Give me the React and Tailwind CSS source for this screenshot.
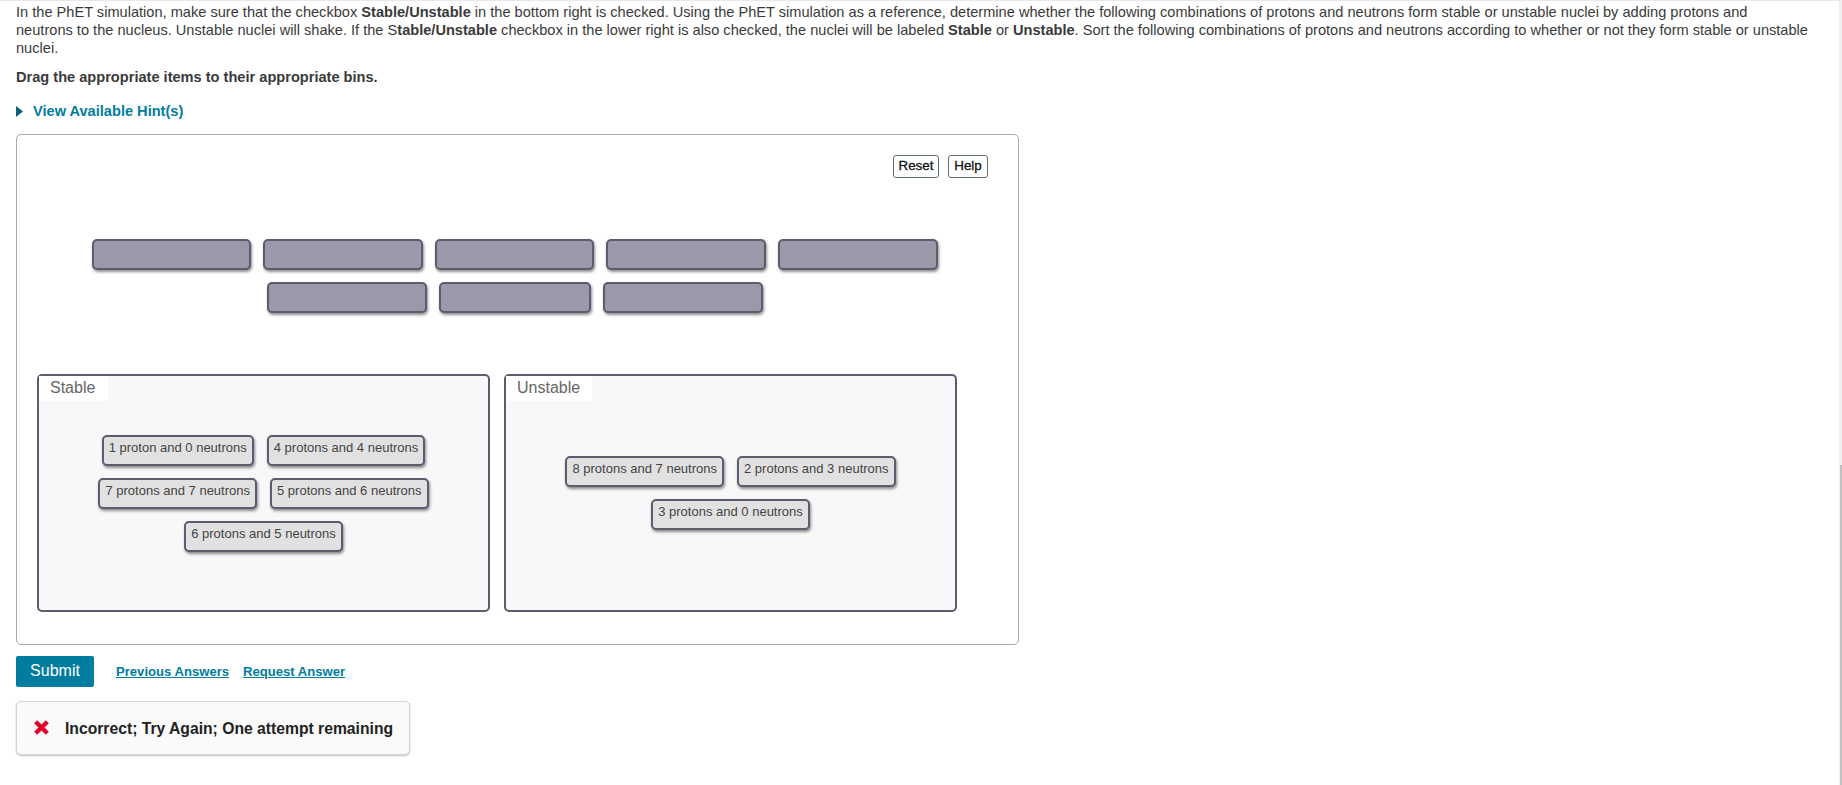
const Empty = ({ w }) => (
  <div className={`h-[31px] ${w} rounded-[5px] border-2 border-[#5c5c6e] bg-[#9a99aa] shadow-[1px_2px_3px_rgba(0,0,0,0.45)]`} />
);

const Chip = ({ children }) => (
  <div className="h-[31px] rounded-[5px] border-2 border-[#5c5c6e] bg-[#e1e1e1] px-[5px] text-[13px] leading-[22px] text-[#444] shadow-[1px_2px_3px_rgba(0,0,0,0.45)] whitespace-nowrap">
    {children}
  </div>
);

const Bin = ({ title, w, labelW, items }) => (
  <div className={`relative h-[238px] ${w} rounded-[5px] border-2 border-[#5c5c6e] bg-[#f8f8f8] flex flex-wrap content-center justify-center gap-x-[13px] gap-y-[12px] px-[40px]`}>
    <div className={`absolute left-0 top-0 h-[25px] ${labelW} bg-white pl-[11px] text-[16px] leading-[24px] text-[#666]`}>{title}</div>
    {items}
  </div>
);

export default function App() {
  return (
    <div className="relative h-[785px] overflow-hidden bg-white font-['Liberation_Sans',Arial,sans-serif] text-[14.6px] text-[#3a3a3a]">
      <div className="h-[1px] bg-[#e8e8e8]" />
      <div className="absolute right-0 top-0 h-full w-[3px] bg-[#f0f0f0]">
        <div className="absolute bottom-0 left-[1px] right-0 top-[465px] bg-[#c1c1c1]" />
      </div>
      <div className="pl-[16px] pr-[20px] pt-[2px]">
        <p className="leading-[18px] whitespace-nowrap">
          In the PhET simulation, make sure that the checkbox <b>Stable/Unstable</b> in the bottom right is checked. Using the PhET simulation as a reference, determine whether the following combinations of protons and neutrons form stable or unstable nuclei by adding protons and<br />
          neutrons to the nucleus. Unstable nuclei will shake. If the S<b>table/Unstable</b> checkbox in the lower right is also checked, the nuclei will be labeled <b>Stable</b> or <b>Unstable</b>. Sort the following combinations of protons and neutrons according to whether or not they form stable or unstable<br />
          nuclei.
        </p>
        <p className="mt-[11px] font-bold leading-[18px]">Drag the appropriate items to their appropriate bins.</p>
        <div className="mt-[16px] flex h-[18px] items-center gap-[10px] font-bold text-[#007c9e]">
          <svg width="7" height="11" viewBox="0 0 7 11"><path d="M0 0 L7 5.5 L0 11 Z" fill="#0b5f78" /></svg>
          <span className="leading-[18px]">View Available Hint(s)</span>
        </div>

        <div className="mt-[14px] h-[511px] w-[1003px] rounded-[5px] border border-[#aaa] bg-white">
          <div className="flex justify-end gap-[9px] pr-[30px] pt-[20px]">
            <button className="h-[23px] w-[46px] rounded-[3px] border border-[#5f6f78] bg-white pb-[2px] text-[13.4px] leading-[18px] text-[#111] [-webkit-text-stroke:0.3px_#111]">Reset</button>
            <button className="h-[23px] w-[40px] rounded-[3px] border border-[#5f6f78] bg-white pb-[2px] text-[13.4px] leading-[18px] text-[#111] [-webkit-text-stroke:0.3px_#111]">Help</button>
          </div>
          <div className="ml-[75px] mt-[61px] flex w-[846px] flex-wrap justify-center gap-x-[12px] gap-y-[12px]">
            <Empty w="w-[159px]" />
            <Empty w="w-[160px]" />
            <Empty w="w-[159px]" />
            <Empty w="w-[160px]" />
            <Empty w="w-[160px]" />
            <Empty w="w-[160px]" />
            <Empty w="w-[152px]" />
            <Empty w="w-[160px]" />
          </div>
          <div className="ml-[20px] mt-[61px] flex gap-[14px]">
            <Bin
              title="Stable"
              w="w-[453px]"
              labelW="w-[69px]"
              items={<>
                <Chip>1 proton and 0 neutrons</Chip>
                <Chip>4 protons and 4 neutrons</Chip>
                <Chip>7 protons and 7 neutrons</Chip>
                <Chip>5 protons and 6 neutrons</Chip>
                <Chip>6 protons and 5 neutrons</Chip>
              </>}
            />
            <Bin
              title="Unstable"
              w="w-[453px]"
              labelW="w-[86px]"
              items={<>
                <Chip>8 protons and 7 neutrons</Chip>
                <Chip>2 protons and 3 neutrons</Chip>
                <Chip>3 protons and 0 neutrons</Chip>
              </>}
            />
          </div>
        </div>

        <div className="mt-[11px] flex items-center">
          <button className="h-[31px] w-[78px] rounded-[2px] bg-[#007c9e] pb-[1px] text-[16px] text-white">Submit</button>
          <a className="ml-[22px] text-[13.1px] font-bold text-[#007c9e] underline">Previous Answers</a>
          <a className="ml-[14px] text-[13.1px] font-bold text-[#007c9e] underline">Request Answer</a>
        </div>

        <div className="mt-[14px] flex h-[54px] w-[394px] items-center rounded-[5px] border border-[#d5d5d5] bg-[#fafafa] pl-[16px] pt-[2px] shadow-[0_1px_2px_rgba(0,0,0,0.25)]">
          <svg width="17" height="17" viewBox="0 0 16 16" className="-mt-[3px]"><path d="M2.5 2.5 L13.5 13.5 M13.5 2.5 L2.5 13.5" stroke="#e0002b" strokeWidth="4" /></svg>
          <span className="ml-[15px] text-[15.7px] font-bold text-[#222]">Incorrect; Try Again; One attempt remaining</span>
        </div>
      </div>
    </div>
  );
}
